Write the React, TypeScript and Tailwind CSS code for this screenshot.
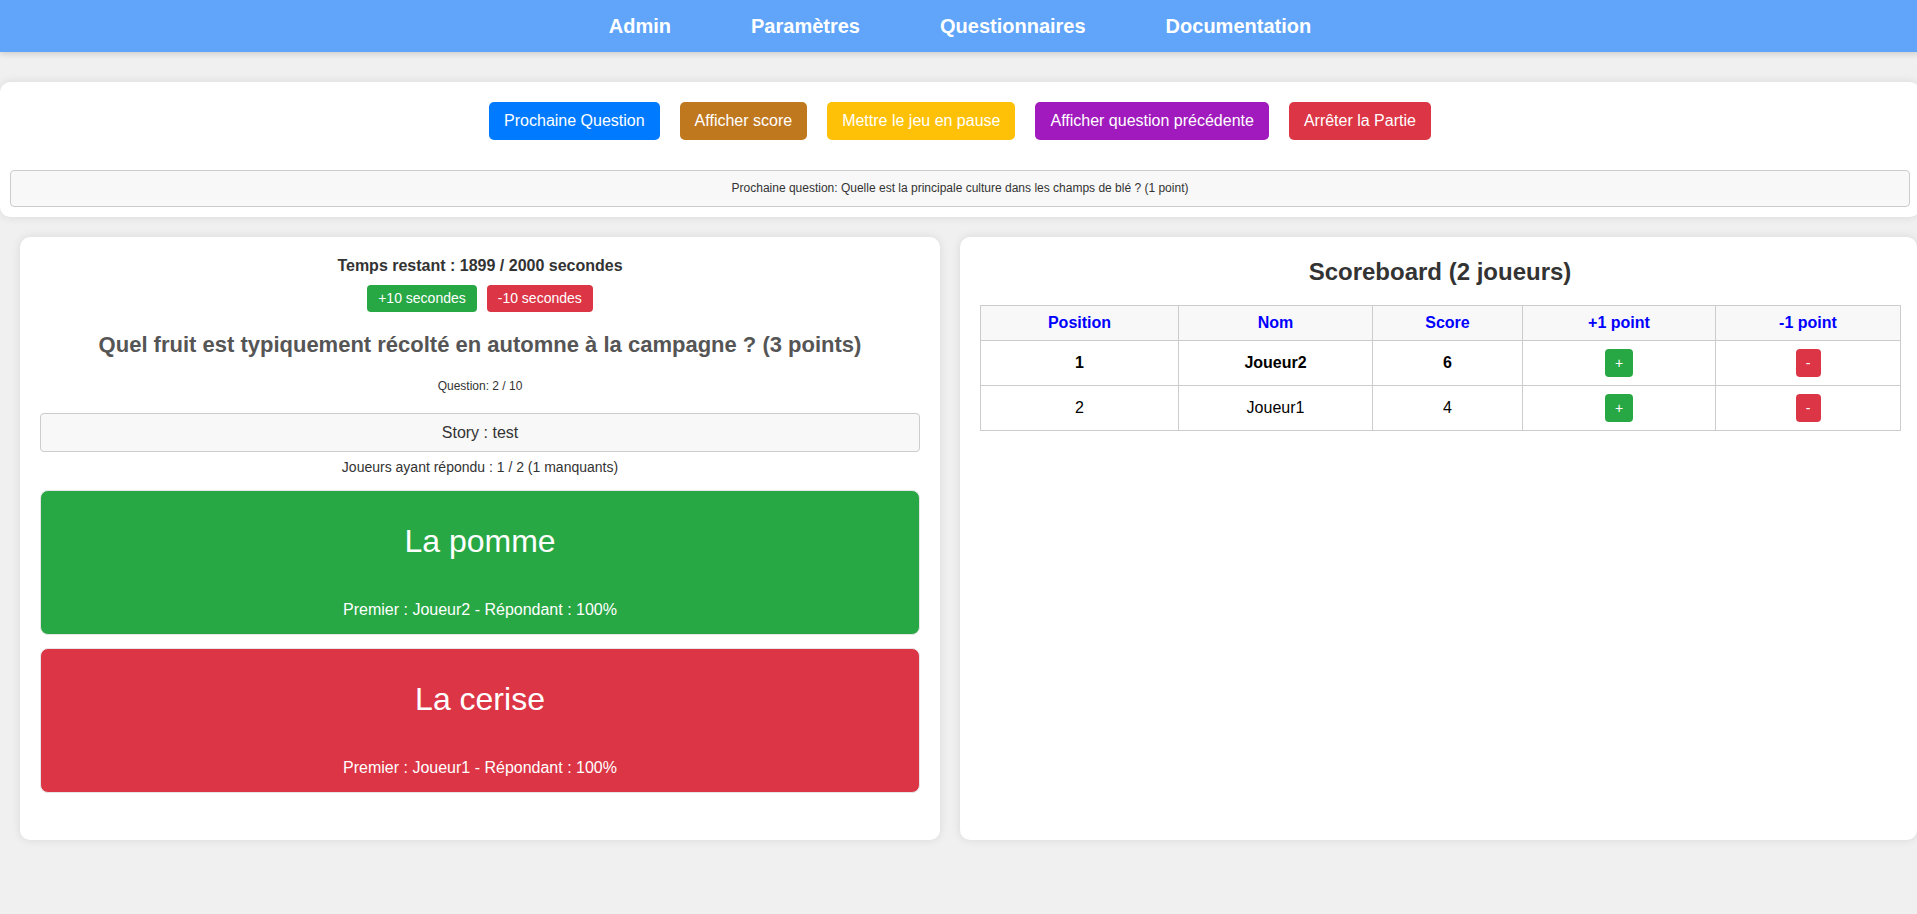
import React from "react";

const navLinks = ["Admin", "Paramètres", "Questionnaires", "Documentation"];

const controls = [
  { label: "Prochaine Question", color: "bg-[#007bff]" },
  { label: "Afficher score", color: "bg-[#c0781f]" },
  { label: "Mettre le jeu en pause", color: "bg-[#ffc107]" },
  { label: "Afficher question précédente", color: "bg-[#a01abd]" },
  { label: "Arrêter la Partie", color: "bg-[#dc3545]" },
];

const answers = [
  { text: "La pomme", first: "Joueur2", rate: "100%", color: "bg-[#28a745]" },
  { text: "La cerise", first: "Joueur1", rate: "100%", color: "bg-[#dc3545]" },
];

const players = [
  { pos: 1, name: "Joueur2", score: 6, leader: true },
  { pos: 2, name: "Joueur1", score: 4, leader: false },
];

function AnswerCard({ text, first, rate, color }: (typeof answers)[number]) {
  return (
    <div
      className={`flex flex-col items-center h-[145px] pt-[32px] rounded-[8px] border border-[#e6e6e6] text-white ${color}`}
    >
      <div className="text-[32px] leading-[37px]">{text}</div>
      <div className="mt-auto mb-[15px] text-[16px] leading-[18px]">
        Premier : {first} - Répondant : {rate}
      </div>
    </div>
  );
}

export default function App() {
  return (
    <div className="w-[1917px] h-[914px] overflow-hidden bg-[#f0f0f0] text-[#333] font-['Liberation_Sans',Arial,sans-serif]">
      <nav className="flex justify-center items-center gap-[80px] w-[1920px] h-[52px] bg-[#60a5fa] shadow-[0_2px_6px_rgba(0,0,0,0.15)]">
        {navLinks.map((l) => (
          <a key={l} className="text-white text-[20px] font-bold leading-[23px] cursor-pointer">
            {l}
          </a>
        ))}
      </nav>

      <section className="mt-[30px] w-[1920px] bg-white rounded-[10px] shadow-[0_0_10px_rgba(0,0,0,0.1)] pt-[20px] pb-[10px] px-[10px]">
        <div className="flex justify-center gap-[20px]">
          {controls.map((c) => (
            <button
              key={c.label}
              className={`${c.color} text-white text-[16px] leading-[18px] py-[10px] px-[15px] rounded-[5px]`}
            >
              {c.label}
            </button>
          ))}
        </div>
        <div className="mt-[30px] border border-[#ccc] bg-[#f8f8f8] rounded-[4px] py-[10px] text-center text-[12px] leading-[15px] text-[#333]">
          Prochaine question: Quelle est la principale culture dans les champs de blé ? (1 point)
        </div>
      </section>

      <div className="flex gap-[20px] mt-[20px] pl-[20px]">
        <section className="w-[920px] h-[603px] shrink-0 bg-white rounded-[10px] shadow-[0_0_10px_rgba(0,0,0,0.1)] pt-[20px] px-[20px] flex flex-col items-stretch text-center">
          <p className="text-[16px] leading-[18px] font-bold text-[#333]">
            Temps restant : 1899 / 2000 secondes
          </p>
          <div className="flex justify-center gap-[10px] mt-[10px]">
            <button className="bg-[#28a745] text-white text-[14px] leading-[17px] py-[5px] px-[11px] rounded-[4px]">
              +10 secondes
            </button>
            <button className="bg-[#dc3545] text-white text-[14px] leading-[17px] py-[5px] px-[11px] rounded-[4px]">
              -10 secondes
            </button>
          </div>
          <h2 className="mt-[20px] text-[22px] leading-[25px] font-bold text-[#555]">
            Quel fruit est typiquement récolté en automne à la campagne ? (3 points)
          </h2>
          <p className="mt-[22px] text-[12px] leading-[14px]">Question: 2 / 10</p>
          <div className="mt-[20px] border border-[#ccc] bg-[#f8f8f8] rounded-[4px] py-[9px] text-[16px] leading-[19px]">
            Story : test
          </div>
          <p className="mt-[7px] text-[14px] leading-[16px]">
            Joueurs ayant répondu : 1 / 2 (1 manquants)
          </p>
          <div className="mt-[15px] flex flex-col gap-[13px]">
            {answers.map((a) => (
              <AnswerCard key={a.text} {...a} />
            ))}
          </div>
        </section>

        <section className="w-[957px] h-[603px] shrink-0 bg-white rounded-[10px] shadow-[0_0_10px_rgba(0,0,0,0.1)] pt-[21px] pl-[20px]">
          <h2 className="text-center w-[920px] text-[24px] leading-[28px] font-bold text-[#333]">
            Scoreboard (2 joueurs)
          </h2>
          <table className="mt-[19px] w-[920px] border-collapse text-[16px] text-center table-fixed">
            <colgroup>
              <col className="w-[198px]" />
              <col className="w-[194px]" />
              <col className="w-[150px]" />
              <col className="w-[193px]" />
              <col className="w-[185px]" />
            </colgroup>
            <thead>
              <tr className="bg-[#f8f8f8] h-[35px]">
                {["Position", "Nom", "Score", "+1 point", "-1 point"].map((h) => (
                  <th key={h} className="border border-[#ccc] text-[#0000ff] font-bold">
                    {h}
                  </th>
                ))}
              </tr>
            </thead>
            <tbody>
              {players.map((p) => (
                <tr key={p.name} className={`h-[45px] text-black ${p.leader ? "font-bold" : ""}`}>
                  <td className="border border-[#ccc]">{p.pos}</td>
                  <td className="border border-[#ccc]">{p.name}</td>
                  <td className="border border-[#ccc]">{p.score}</td>
                  <td className="border border-[#ccc]">
                    <button className="w-[28px] h-[28px] bg-[#28a745] text-white text-[14px] font-normal rounded-[4px]">
                      +
                    </button>
                  </td>
                  <td className="border border-[#ccc]">
                    <button className="w-[25px] h-[28px] bg-[#dc3545] text-white text-[14px] font-normal rounded-[4px]">
                      -
                    </button>
                  </td>
                </tr>
              ))}
            </tbody>
          </table>
        </section>
      </div>
    </div>
  );
}
